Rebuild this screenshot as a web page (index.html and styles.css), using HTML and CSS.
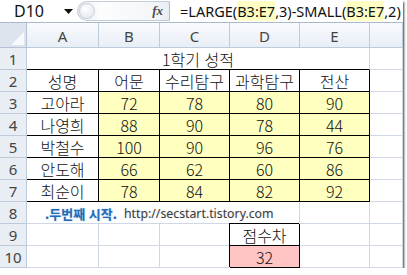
FILE: index.html
```html
<!DOCTYPE html>
<html lang="ko">
<head>
    <meta charset="UTF-8">
    <title>1학기 성적</title>
    <link rel="stylesheet" href="styles.css">
</head>
<body>
    <div class="window">
        <!-- Formula bar -->
        <div class="formula-bar">
            <div class="name-box">D10</div>
            <div class="name-drop">
                <svg width="9" height="5" viewBox="0 0 9 5"><polygon points="0,0 9,0 4.5,5" fill="#111"/></svg>
            </div>
            <div class="fx-area">
                <span class="grip"></span>
                <span class="fx">fx</span>
            </div>
            <div class="formula">=LARGE(<span class="ref">B3:E7</span>,3)-SMALL(<span class="ref">B3:E7</span>,2)</div>
        </div>

        <!-- Sheet grid -->
        <div class="sheet">
            <div class="cell corner">
                <svg width="13" height="13" viewBox="0 0 13 13"><polygon points="13,0 13,13 0,13" fill="#f7f9fc"/></svg>
            </div>
            <div class="cell col-head">A</div>
            <div class="cell col-head">B</div>
            <div class="cell col-head">C</div>
            <div class="cell col-head">D</div>
            <div class="cell col-head">E</div>
            <div class="cell col-head"></div>

            <div class="cell row-head">1</div>
            <div class="cell title">1학기 성적</div>
            <div class="cell"></div>

            <div class="cell row-head">2</div>
            <div class="cell box">성명</div>
            <div class="cell box">어문</div>
            <div class="cell box">수리탐구</div>
            <div class="cell box">과학탐구</div>
            <div class="cell box">전산</div>
            <div class="cell"></div>

            <div class="cell row-head">3</div>
            <div class="cell box">고아라</div>
            <div class="cell box score">72</div>
            <div class="cell box score">78</div>
            <div class="cell box score">80</div>
            <div class="cell box score">90</div>
            <div class="cell"></div>

            <div class="cell row-head">4</div>
            <div class="cell box">나영희</div>
            <div class="cell box score">88</div>
            <div class="cell box score">90</div>
            <div class="cell box score">78</div>
            <div class="cell box score">44</div>
            <div class="cell"></div>

            <div class="cell row-head">5</div>
            <div class="cell box">박철수</div>
            <div class="cell box score">100</div>
            <div class="cell box score">90</div>
            <div class="cell box score">96</div>
            <div class="cell box score">76</div>
            <div class="cell"></div>

            <div class="cell row-head">6</div>
            <div class="cell box">안도해</div>
            <div class="cell box score">66</div>
            <div class="cell box score">62</div>
            <div class="cell box score">60</div>
            <div class="cell box score">86</div>
            <div class="cell"></div>

            <div class="cell row-head">7</div>
            <div class="cell box">최순이</div>
            <div class="cell box score">78</div>
            <div class="cell box score">84</div>
            <div class="cell box score">82</div>
            <div class="cell box score">92</div>
            <div class="cell"></div>

            <div class="cell row-head">8</div>
            <div class="cell blog">
                <span class="blog-name">.두번째 시작.</span>
                <span class="blog-url">http://secstart.tistory.com</span>
            </div>
            <div class="cell"></div>
            <div class="cell"></div>

            <div class="cell row-head">9</div>
            <div class="cell"></div>
            <div class="cell"></div>
            <div class="cell"></div>
            <div class="cell box result">점수차</div>
            <div class="cell"></div>
            <div class="cell"></div>

            <div class="cell row-head">10</div>
            <div class="cell"></div>
            <div class="cell"></div>
            <div class="cell"></div>
            <div class="cell box result diff">32</div>
            <div class="cell"></div>
            <div class="cell"></div>
        </div>
    </div>
</body>
</html>
```

FILE: styles.css
```css
/* Reset */
* {
    margin: 0;
    padding: 0;
    box-sizing: border-box;
}

body {
    background-color: #ffffff;
    font-family: "Noto Sans", "Noto Sans CJK KR", sans-serif;
    color: #000000;
}

/* Excel window */
.window {
    width: 403px;
    background-color: #ffffff;
    box-shadow: 1px 2px 2px rgba(0, 0, 0, 0.75);
}

/* Formula bar */
.formula-bar {
    display: flex;
    align-items: center;
    height: 23px;
    border-bottom: 1px solid #a9b8cb;
}

.name-box {
    width: 62px;
    padding-left: 14px;
    font-size: 16px;
    line-height: 22px;
    color: #111;
}

.name-drop {
    display: flex;
    align-items: center;
    width: 13px;
    padding-left: 2px;
}

.fx-area {
    display: flex;
    align-items: center;
    justify-content: space-between;
    width: 93px;
    height: 20px;
    margin-left: 2px;
    padding-right: 6px;
    border: 1px solid #c4ccd8;
    border-right: 1px solid #b0bccb;
    border-radius: 10px 0 0 10px;
    background: linear-gradient(to right, #e6eaf0, #fdfdfe 25%, #f4f6f9 80%, #e9edf3);
}

.grip {
    width: 16px;
    height: 16px;
    margin-left: 1px;
    border-radius: 50%;
    border: 1px solid #c9d0da;
    background: radial-gradient(circle at 40% 35%, #ffffff, #dfe4ea);
}

.fx {
    font-family: "Liberation Serif", serif;
    font-style: italic;
    font-weight: bold;
    font-size: 13px;
    color: #4a4a4a;
}

.formula {
    padding-left: 10px;
    font-size: 14.5px;
    line-height: 22px;
    white-space: nowrap;
    color: #111;
}

.ref {
    background-color: #ffffc4;
}

/* Sheet */
.sheet {
    display: grid;
    grid-template-columns: 27px 72px 61px 70px 70px 70px 33px;
    grid-template-rows: 25px repeat(10, 22px);
}

.cell {
    display: flex;
    align-items: center;
    justify-content: center;
    padding-top: 1px;
    border-right: 1px solid #d0d7e5;
    border-bottom: 1px solid #d0d7e5;
    font-family: "Noto Sans CJK KR", sans-serif;
    font-size: 16px;
    font-weight: 300;
    color: #111;
    white-space: nowrap;
}

.corner {
    align-items: flex-end;
    justify-content: flex-end;
    padding: 0 2px 2px 0;
    background-color: #dde4ed;
    border-color: #b4c2d3;
}

.col-head {
    font-family: "Noto Sans", sans-serif;
    font-size: 15px;
    font-weight: normal;
    color: #444;
    background: linear-gradient(#f9fbfd, #e8eef6);
    border-color: #bccada;
}

.row-head {
    font-family: "Noto Sans", sans-serif;
    font-size: 15px;
    font-weight: normal;
    color: #444;
    background-color: #e9eef5;
    border-color: #bccada;
}

.title {
    grid-column: span 5;
    border-bottom-color: #000;
}

.box {
    border-right-color: #000;
    border-bottom-color: #000;
}

.score {
    background-color: #ffffbf;
}

/* Row 8 blog line */
.blog {
    grid-column: span 4;
    justify-content: flex-start;
    padding-left: 18px;
    gap: 7px;
}

.blog-name {
    font-size: 13px;
    font-weight: bold;
    color: #2469b5;
    text-shadow: 0 0 2px #a9d0ef;
}

.blog-url {
    font-family: "Noto Sans", sans-serif;
    font-size: 12.3px;
    font-weight: normal;
    color: #3c3c3c;
    text-shadow: 0 0 2px #d6d6d6;
}

/* 점수차 box */
.result {
    box-shadow: -1px -1px 0 #000;
}

.diff {
    background-color: #ffc4c4;
}
```
